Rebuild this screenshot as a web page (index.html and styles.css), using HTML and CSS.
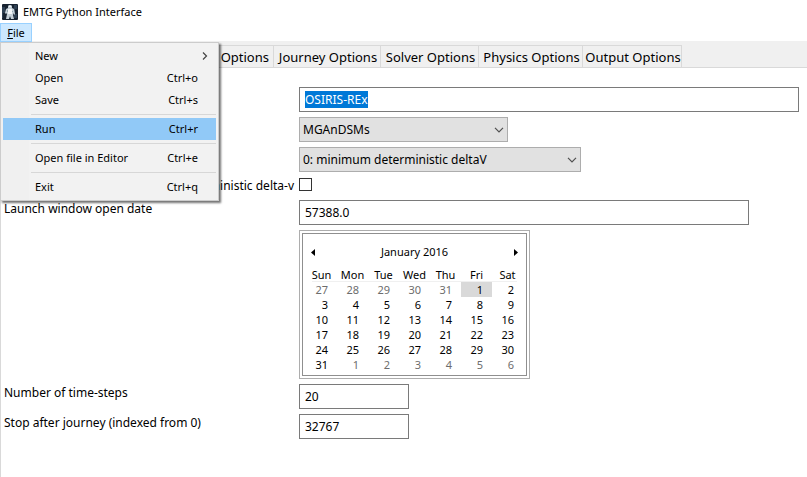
FILE: index.html
```html
<!DOCTYPE html>
<html lang="en">
<head>
<meta charset="utf-8">
<title>EMTG Python Interface</title>
<link rel="stylesheet" href="styles.css">
</head>
<body>
<header class="titlebar">
  <svg class="app-icon" width="16" height="16" viewBox="0 0 16 16" aria-hidden="true">
    <rect width="16" height="16" rx="1" fill="#172230"/>
    <path d="M0 3h3v6H1v5H0zM12 1h3v4h-2v5h2v4h-3z" fill="#2e4053"/>
    <path d="M6 2l1-1h2l1 1v2l2 1 1 5-1 1-1-2v2l1 4H9l-1-3-1 3H4l1-5V9l-1 1-1-1 1-4 2-1z" fill="#c5d0d8"/>
    <path d="M7 2h2v1H7zM6 5h4v5H6z" fill="#f3f6f8"/>
    <path d="M5 6h1v2H5zM10 7h1v1h-1z" fill="#90a4ae"/>
  </svg>
  <span>EMTG Python Interface</span>
</header>
<nav class="menubar">
  <button class="menu-title" type="button"><u>F</u>ile</button>
  <div class="menu">
    <button class="item" type="button"><span>New</span><svg width="6" height="8" viewBox="0 0 6 8" aria-hidden="true"><path d="M1 .5L4.500 4 1 7.500" fill="none" stroke="#444" stroke-width="1.200"/></svg></button>
    <button class="item" type="button"><span>Open</span><span>Ctrl+o</span></button>
    <button class="item" type="button"><span>Save</span><span>Ctrl+s</span></button>
    <hr>
    <button class="item current" type="button"><span>Run</span><span>Ctrl+r</span></button>
    <hr>
    <button class="item" type="button"><span>Open file in Editor</span><span>Ctrl+e</span></button>
    <hr>
    <button class="item" type="button"><span>Exit</span><span>Ctrl+q</span></button>
  </div>
</nav>
<div class="tabs">
  <button class="tab spacecraft" type="button">Options</button>
  <button class="tab journey" type="button">Journey Options</button>
  <button class="tab solver" type="button">Solver Options</button>
  <button class="tab physics" type="button">Physics Options</button>
  <button class="tab output" type="button">Output Options</button>
</div>
<main class="form">
  <input class="control wide" type="text" value="OSIRIS-REx" id="mission" aria-label="Mission name" autofocus>
  <select class="control mission-type" aria-label="Mission type"><option>MGAnDSMs</option></select>
  <select class="control objective" aria-label="Objective"><option>0: minimum deterministic deltaV</option></select>
  <label class="end" for="dv">deterministic delta-v</label>
  <div class="check-cell control"><input type="checkbox" id="dv"></div>
  <label for="launch">Launch window open date</label>
  <input class="control launch" type="text" value="57388.0" id="launch">
  <div class="calendar control">
    <div class="calendar-inner">
      <div class="month">
        <button type="button" aria-label="Previous month"><svg width="4" height="7" viewBox="0 0 4 7"><path d="M4 0v7L0 3.500z"/></svg></button>
        <span>January 2016</span>
        <button type="button" aria-label="Next month"><svg width="4" height="7" viewBox="0 0 4 7"><path d="M0 0v7l4-3.500z"/></svg></button>
      </div>
      <table>
        <thead><tr><th>Sun</th><th>Mon</th><th>Tue</th><th>Wed</th><th>Thu</th><th>Fri</th><th>Sat</th></tr></thead>
        <tbody>
          <tr><td class="out">27</td><td class="out">28</td><td class="out">29</td><td class="out">30</td><td class="out">31</td><td class="day">1</td><td>2</td></tr>
          <tr><td>3</td><td>4</td><td>5</td><td>6</td><td>7</td><td>8</td><td>9</td></tr>
          <tr><td>10</td><td>11</td><td>12</td><td>13</td><td>14</td><td>15</td><td>16</td></tr>
          <tr><td>17</td><td>18</td><td>19</td><td>20</td><td>21</td><td>22</td><td>23</td></tr>
          <tr><td>24</td><td>25</td><td>26</td><td>27</td><td>28</td><td>29</td><td>30</td></tr>
          <tr><td>31</td><td class="out">1</td><td class="out">2</td><td class="out">3</td><td class="out">4</td><td class="out">5</td><td class="out">6</td></tr>
        </tbody>
      </table>
    </div>
  </div>
  <label for="steps">Number of time-steps</label>
  <input class="control short" type="text" value="20" id="steps">
  <label for="stop">Stop after journey (indexed from 0)</label>
  <input class="control short" type="text" value="32767" id="stop">
</main>
<script src="main.js"></script>
</body>
</html>
```
FILE: styles.css
```css
* { box-sizing: border-box; }
body {
  margin: 0;
  min-height: 100vh;
  display: flex;
  flex-direction: column;
  background: #fff;
  color: #000;
  font: 12px/18px "Noto Sans", "Open Sans", sans-serif;
}
button, input, select { font: inherit; color: inherit; margin: 0; }
button { border: 0; background: none; padding: 0; }

.titlebar {
  display: flex;
  align-items: center;
  gap: 5px;
  height: 23px;
  padding-left: 2px;
  font-size: 11px;
}
.menubar { position: relative; height: 18px; font-size: 11px; }
.menu-title {
  position: relative;
  display: block;
  width: 32px;
  height: 19px;
  line-height: 17px;
  border: 1px solid #99d1ff;
  background: #cce8ff;
}
.menu {
  position: absolute;
  z-index: 2;
  top: 19px;
  left: 0;
  width: 219px;
  padding: 2px;
  border: 1px solid #ccc;
  background: linear-gradient(90deg, #f0f0f0 28px, #f2f2f2 28px);
  box-shadow: 2px 2px 2px rgba(0, 0, 0, .55);
}
.item {
  display: flex;
  justify-content: space-between;
  align-items: center;
  width: 100%;
  height: 22px;
  padding: 0 18px 0 32px;
}
.item svg { margin-right: -10px; }
.current { background: #91c9f7; }
.menu hr {
  height: 1px;
  margin: 3px 0 3px 28px;
  border: 0;
  background: #d7d7d7;
}

.tabs {
  display: flex;
  height: 27px;
  padding-top: 4px;
  background: #f0f0f0;
  border-bottom: 1px solid #d9d9d9;
  font-size: 13px;
}
.tab {
  padding-left: 2px;
  border: 1px solid #d9d9d9;
  border-width: 1px 1px 0 0;
  text-align: center;
  white-space: nowrap;
}
.spacecraft { width: 274px; padding-right: 4px; text-align: right; }
.journey { width: 107px; }
.solver { width: 98px; }
.physics { width: 104px; }
.output { width: 99px; }

.form {
  flex: 1;
  display: grid;
  grid-template-columns: 290px 1fr;
  align-content: start;
  column-gap: 5px;
  row-gap: 5px;
  padding: 19px 8px 19px 3px;
  border-left: 1px solid #d9d9d9;
}
.form label { grid-column: 1; }
.form .end { text-align: right; }
.control { grid-column: 2; }
.form input[type="text"] {
  height: 25px;
  padding: 0 5px;
  border: 1px solid #7a7a7a;
  border-radius: 0;
  outline: 0;
  background: #fff;
}
.form .wide { width: 100%; }
.launch { width: 90%; }
.short { width: 110px; }
::selection { background: #0078d7; color: #fff; }
select {
  height: 25px;
  padding: 0 24px 0 3px;
  border: 1px solid #adadad;
  border-radius: 0;
  appearance: none;
  background: #e1e1e1 url("data:image/svg+xml,%3Csvg xmlns='http://www.w3.org/2000/svg' width='10' height='6'%3E%3Cpath d='M1 .8L5 4.800 9 .8' fill='none' stroke='%23505050' stroke-width='1.200'/%3E%3C/svg%3E") no-repeat right 3px center;
}
.mission-type { width: 209px; }
.objective { width: 282px; }
.check-cell { height: 18px; padding-top: 1px; }
input[type="checkbox"] {
  display: block;
  width: 13px;
  height: 13px;
  border: 1px solid #333;
  appearance: none;
  background: #fff;
}

.calendar {
  width: 231px;
  padding: 2px;
  border: 1px solid #adadad;
  font-size: 11px;
}
.calendar-inner { padding: 8px 3px 3px; border: 1px solid #8f8f8f; }
.month {
  display: flex;
  justify-content: space-between;
  align-items: center;
  height: 20px;
  padding: 0 5px;
}
.month button { display: flex; }
table { width: 217px; margin-top: 4px; border-collapse: collapse; table-layout: fixed; }
th, td { height: 15px; padding: 0; line-height: 15px; }
th { height: 16px; font-weight: normal; text-align: center; }
thead { background: linear-gradient(#f0f0f0, #f0f0f0) no-repeat center bottom / 205px 1px; }
td { padding-right: 9px; text-align: right; }
.out { color: #6d6d6d; }
.day { background: #d9d9d9; }
```
FILE: main.js
```js
const mission = document.getElementById("mission");
mission.focus();
mission.select();
```
